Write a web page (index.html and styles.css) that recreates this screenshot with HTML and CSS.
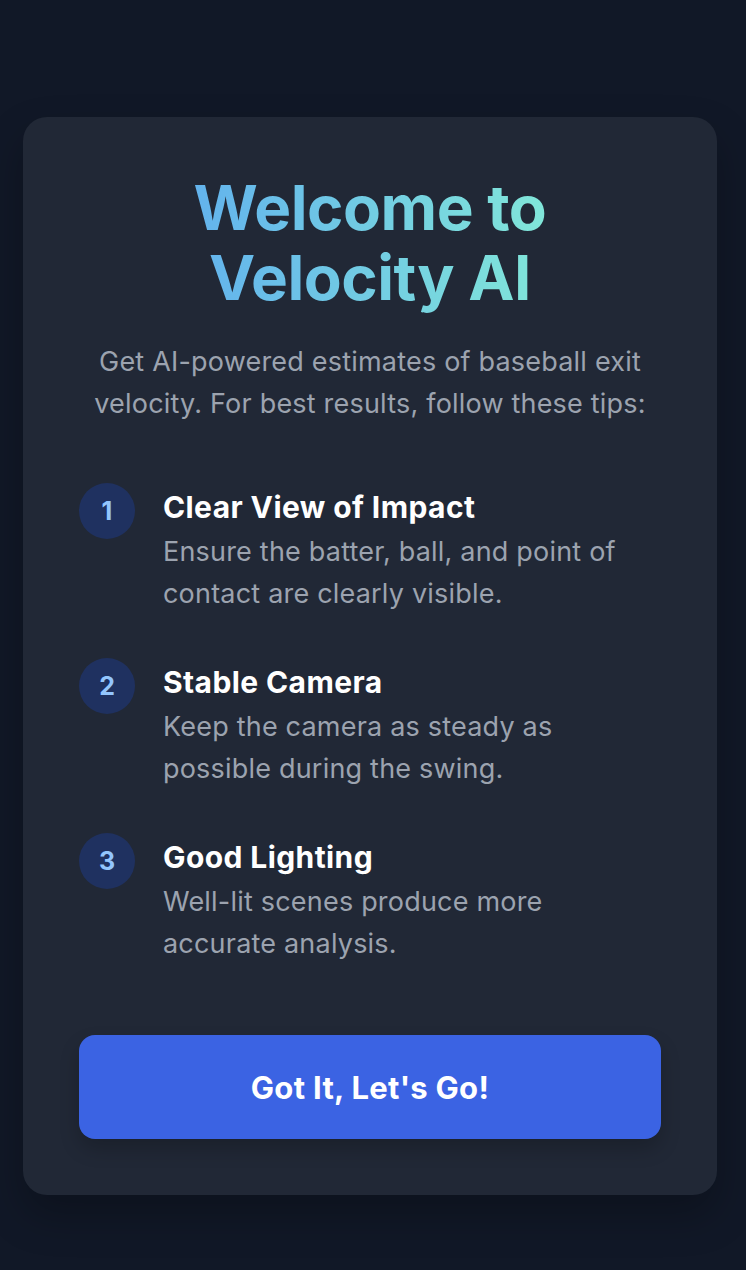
FILE: index.html
```html
<!DOCTYPE html>
<html lang="en">
<head>
<meta charset="utf-8">
<title>Welcome to Velocity AI</title>
<link rel="stylesheet" href="styles.css">
</head>
<body>
<main class="page">
  <section class="card">
    <h1 class="title"><span class="grad">Welcome to<br>Velocity AI</span></h1>
    <p class="intro">Get AI-powered estimates of baseball exit velocity. For best results, follow these tips:</p>
    <ol class="tips">
      <li class="tip">
        <span class="num">1</span>
        <div class="tip-body">
          <h2 class="tip-title">Clear View of Impact</h2>
          <p class="tip-text">Ensure the batter, ball, and point of contact are clearly visible.</p>
        </div>
      </li>
      <li class="tip">
        <span class="num">2</span>
        <div class="tip-body">
          <h2 class="tip-title">Stable Camera</h2>
          <p class="tip-text">Keep the camera as steady as possible during the swing.</p>
        </div>
      </li>
      <li class="tip">
        <span class="num">3</span>
        <div class="tip-body">
          <h2 class="tip-title">Good Lighting</h2>
          <p class="tip-text">Well-lit scenes produce more accurate analysis.</p>
        </div>
      </li>
    </ol>
    <button class="cta" type="button">Got It, Let's Go!</button>
  </section>
</main>
</body>
</html>
```
FILE: styles.css
```css
* { box-sizing: border-box; }
html, body { margin: 0; padding: 0; }
body {
  background: #111827;
  font-family: Inter, "Noto Sans", sans-serif;
  min-height: 1270px;
}
.page {
  padding: 117px 23px 0;
}
.card {
  width: 694px;
  background: #212836;
  border-radius: 24px;
  padding: 56px;
  box-shadow: 0 20px 40px rgba(0,0,0,0.25);
}
.title {
  margin: 0;
  text-align: center;
  font-size: 62px;
  line-height: 70px;
  font-weight: 700;
  letter-spacing: -0.5px;
}
.grad {
  display: inline-block;
  background: linear-gradient(90deg, #63b3ed, #81e6d9);
  -webkit-background-clip: text;
  background-clip: text;
  color: transparent;
}
.intro {
  margin: 28px 0 0;
  text-align: center;
  color: #9ca3af;
  font-size: 27px;
  line-height: 42px;
  letter-spacing: 0.2px;
}
.tips {
  list-style: none;
  margin: 58px 0 0;
  padding: 0;
  display: flex;
  flex-direction: column;
  gap: 43px;
}
.tip {
  display: flex;
  gap: 28px;
  align-items: flex-start;
}
.num {
  flex: none;
  width: 56px;
  height: 56px;
  border-radius: 50%;
  background: rgba(30, 58, 138, 0.5);
  color: #93c5fd;
  font-weight: 700;
  font-size: 25px;
  display: flex;
  align-items: center;
  justify-content: center;
}
.tip-title {
  margin: 0;
  color: #ffffff;
  font-size: 30px;
  line-height: 48px;
  font-weight: 700;
  letter-spacing: 0.4px;
}
.tip-text {
  margin: 0;
  color: #9ca3af;
  font-size: 27px;
  line-height: 42px;
  letter-spacing: 0.2px;
}
.cta {
  display: block;
  width: 100%;
  height: 104px;
  margin-top: 70px;
  border: 0;
  border-radius: 16px;
  background: #3b63e3;
  color: #ffffff;
  font-family: Inter, "Noto Sans", sans-serif;
  font-weight: 700;
  font-size: 31px;
  letter-spacing: 0.3px;
  box-shadow: 0 10px 20px rgba(0,0,0,0.2);
}
```
